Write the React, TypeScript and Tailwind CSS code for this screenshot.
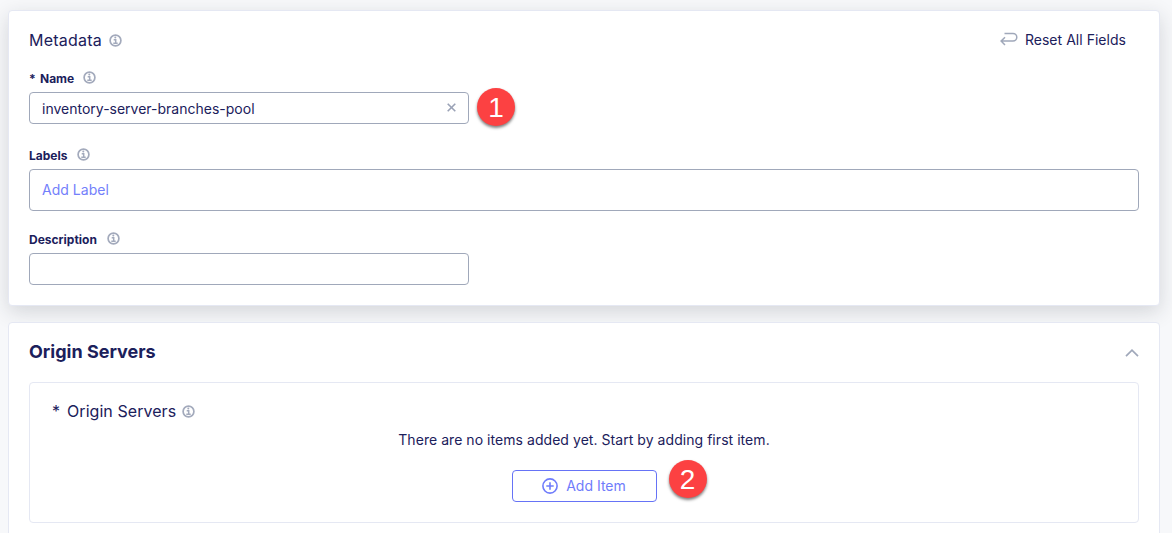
import React, { useState } from "react";

function InfoIcon({ className = "" }: { className?: string }) {
  return (
    <svg className={`size-[13px] shrink-0 text-[#a3aabc] ${className}`} viewBox="0 0 13 13" fill="none" stroke="currentColor">
      <circle cx="6.5" cy="6.5" r="5.4" strokeWidth="1.7" />
      <path d="M4.7 5.7h2v3.4M4.3 9.3h4.4" strokeWidth="1.5" />
      <circle cx="6.3" cy="3.6" r="1" fill="currentColor" stroke="none" />
    </svg>
  );
}

function StepBadge({ step, className }: { step: number; className: string }) {
  return (
    <span
      className={`absolute flex size-[38px] items-center justify-center rounded-full bg-[#fc4142] pt-px font-['Liberation_Sans',sans-serif] text-[28px] leading-none text-white shadow-[0_2px_3px_rgba(0,0,0,0.5)] ${className}`}
    >
      {step}
    </span>
  );
}

function FieldLabel({ text, required = false }: { text: string; required?: boolean }) {
  return (
    <div className="flex h-4 items-center text-[12px] font-bold leading-4">
      {required && <span className="w-[11px]">*</span>}
      <span>{text}</span>
      <InfoIcon className={required ? "mb-[3px] ml-[9px]" : "mb-[3px] ml-[10px]"} />
    </div>
  );
}

export default function App() {
  const [name, setName] = useState("inventory-server-branches-pool");
  const [description, setDescription] = useState("");

  return (
    <main className="h-[533px] overflow-hidden bg-[#f7f8fa] px-2 pt-[10px] pr-3 font-['Inter',sans-serif] text-[#1b205b]">
      <section className="h-[296px] rounded-[4px] border border-[#e5e8f3] bg-white px-5 shadow-[0_6px_20px_rgba(30,35,50,0.16)]">
        <header className="flex h-[60px] items-center justify-between pr-[13px] pb-0.5">
          <h2 className="flex items-center text-[16px] tracking-[0.22px]">
            Metadata
            <InfoIcon className="ml-[7px]" />
          </h2>
          <button className="flex items-center pb-0.5 text-[14px] tracking-[0.03px]">
            <svg className="mr-[7px] h-[16px] w-[18px] text-[#a0a8ba]" viewBox="0 0 18 16" fill="none" stroke="currentColor" strokeWidth="1.5">
              <path d="M4.5 2.5H13a3.8 3.8 0 0 1 0 7.6H1.2M5 6.2 1.1 10.1 5 14" />
            </svg>
            Reset All Fields
          </button>
        </header>

        <FieldLabel text="Name" required />
        <div className="relative mt-[5px] flex h-8 w-[440px] items-center rounded-[4px] border border-[#a0a8ba] pr-3 pl-3">
          <input
            className="min-w-0 flex-1 text-[14px] outline-none"
            value={name}
            onChange={(e) => setName(e.target.value)}
          />
          <button aria-label="Clear" className="pb-0.5" onClick={() => setName("")}>
            <svg className="size-[9px] text-[#9aa2b6]" viewBox="0 0 9 9" stroke="currentColor" strokeWidth="1.6">
              <path d="m.7.7 7.6 7.6M8.3.7.7 8.3" />
            </svg>
          </button>
          <StepBadge step={1} className="-top-[5px] left-[447px]" />
        </div>

        <div className="mt-6">
          <FieldLabel text="Labels" />
          <div className="mt-[5px] flex h-[42px] items-center rounded-[4px] border border-[#a0a8ba] px-3 text-[14px] tracking-[0.03px] text-[#7380fb]">
            <span className="pb-px">Add Label</span>
          </div>
        </div>

        <div className="mt-[21px]">
          <FieldLabel text="Description" />
          <input
            className="mt-[5px] block h-8 w-[440px] rounded-[4px] border border-[#a0a8ba] px-3 text-[14px] outline-none"
            value={description}
            onChange={(e) => setDescription(e.target.value)}
          />
        </div>
      </section>

      <section className="mt-4 h-[260px] rounded-[4px] border border-[#e5e8f3] bg-white px-5">
        <header className="flex h-[59px] items-center justify-between">
          <h2 className="pb-0.5 text-[18px] font-bold">Origin Servers</h2>
          <svg className="h-[8px] w-[14px] text-[#a0a8ba]" viewBox="0 0 14 8" fill="none" stroke="currentColor" strokeWidth="1.7">
            <path d="m1 7.2 6-6 6 6" />
          </svg>
        </header>
        <div className="h-[141px] rounded-[4px] border border-[#e5e8f3] px-[22px] pt-4">
          <h3 className="flex items-center text-[16px] leading-6 tracking-[0.06px]">
            <span className="w-[15px]">*</span>
            Origin Servers
            <InfoIcon className="ml-[6px]" />
          </h3>
          <p className="mt-[7px] text-center text-[14px] leading-5 tracking-[0.05px]">There are no items added yet. Start by adding first item.</p>
          <div className="relative mx-auto mt-5 w-[145px]">
            <button className="flex h-8 w-full items-center justify-center rounded-[4px] border border-[#6673f6] text-[14px] text-[#6f7cfb]">
              <svg className="mr-2 size-4" viewBox="0 0 16 16" fill="none" stroke="currentColor" strokeWidth="1.6">
                <circle cx="8" cy="8" r="7.1" />
                <path d="M8 4.3v7.4M4.3 8h7.4" />
              </svg>
              <span className="pb-0.5">Add Item</span>
            </button>
            <StepBadge step={2} className="-top-[10px] left-[157px]" />
          </div>
        </div>
      </section>
    </main>
  );
}
